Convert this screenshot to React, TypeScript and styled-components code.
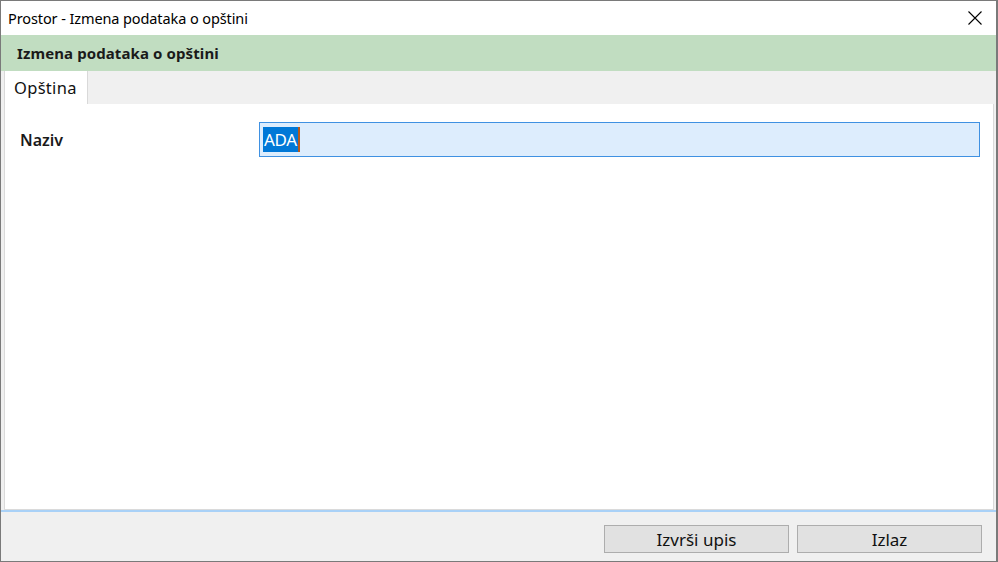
import { createGlobalStyle } from "styled-components";
import styled from "styled-components";

const GlobalStyle = createGlobalStyle`
  html, body {
    margin: 0;
    padding: 0;
    background: #ffffff;
  }
  body {
    font-family: "Noto Sans", "Open Sans", sans-serif;
    color: #000;
  }
`;

const App = () => {
  return (
    <>
      <GlobalStyle />
      <Window>
        <TitleBar>
          <TitleText>Prostor - Izmena podataka o opštini</TitleText>
          <CloseButton aria-label="Zatvori">
            <svg width="14" height="14" viewBox="0 0 14 14">
              <path d="M0.5 0.5 L13.5 13.5 M13.5 0.5 L0.5 13.5" stroke="#000" strokeWidth="1.1" fill="none" />
            </svg>
          </CloseButton>
        </TitleBar>
        <Header>Izmena podataka o opštini</Header>
        <Body>
          <TabStrip>
            <Tab active>Opština</Tab>
          </TabStrip>
          <Panel>
            <FieldRow>
              <Label>Naziv</Label>
              <InputBox>
                <Selected>ADA</Selected>
                <Caret />
              </InputBox>
            </FieldRow>
          </Panel>
          <Footer>
            <Button>Izvrši upis</Button>
            <Button>Izlaz</Button>
          </Footer>
        </Body>
      </Window>
    </>
  );
};

export default App;

const Window = styled.div`
  box-sizing: border-box;
  width: 998px;
  height: 562px;
  border: 1px solid #7a7a7a;
  border-right-width: 2px;
  display: flex;
  flex-direction: column;
  background: #f0f0f0;
`;

const TitleBar = styled.div`
  height: 34px;
  flex-shrink: 0;
  display: flex;
  align-items: center;
  justify-content: space-between;
  padding: 0 14px 0 7px;
  background: #ffffff;
`;

const TitleText = styled.span`
  font-size: 14.5px;
  color: #000;
  letter-spacing: -0.1px;
`;

const CloseButton = styled.div`
  display: flex;
  align-items: center;
  width: 14px;
  height: 14px;
`;

const Header = styled.div`
  height: 36px;
  flex-shrink: 0;
  display: flex;
  align-items: center;
  padding-left: 16px;
  background: #c1ddc1;
  font-size: 15px;
  font-weight: 700;
  color: #1a1a1a;
  letter-spacing: 0.1px;
`;

const Body = styled.div`
  flex: 1;
  display: flex;
  flex-direction: column;
  padding-left: 3px;
  background: #f0f0f0;
`;

const TabStrip = styled.div`
  height: 33px;
  flex-shrink: 0;
  display: flex;
  align-items: flex-end;
  border-left: 1px solid #d9d9d9;
`;

const Tab = styled.div<{ active?: boolean }>`
  box-sizing: border-box;
  height: 33px;
  padding: 0 10px 0 9px;
  display: flex;
  align-items: center;
  font-size: 16.5px;
  letter-spacing: 0.3px;
  color: #111;
  background: ${p => (p.active ? "#ffffff" : "#f0f0f0")};
  border-right: 1px solid #d9d9d9;
`;

const Panel = styled.div`
  flex: 1;
  margin-right: 2px;
  background: #ffffff;
  border: 1px solid #dadada;
  border-top: none;
  padding: 18px 13px 0 15px;
`;

const FieldRow = styled.div`
  display: flex;
  align-items: center;
`;

const Label = styled.span`
  width: 239px;
  font-size: 16px;
  font-weight: 600;
  color: #1a1a1a;
`;

const InputBox = styled.div`
  box-sizing: border-box;
  flex: 1;
  height: 35px;
  display: flex;
  align-items: center;
  padding-left: 3px;
  background: #ddedfd;
  border: 1px solid #3f91e2;
`;

const Selected = styled.span`
  display: inline-flex;
  align-items: center;
  height: 25px;
  padding: 0 1px;
  background: #0078d7;
  color: #ffffff;
  font-size: 17px;
  letter-spacing: -0.3px;
`;

const Caret = styled.span`
  width: 2px;
  height: 25px;
  background: #b85a1c;
`;

const Footer = styled.div`
  box-sizing: border-box;
  height: 51px;
  flex-shrink: 0;
  display: flex;
  align-items: flex-start;
  justify-content: flex-end;
  gap: 8px;
  padding: 13px 14px 0 0;
  margin-left: -3px;
  border-top: 2px solid #a9d1f7;
`;

const Button = styled.div`
  box-sizing: border-box;
  width: 185px;
  height: 28px;
  display: flex;
  align-items: center;
  justify-content: center;
  background: #e1e1e1;
  border: 1px solid #adadad;
  font-size: 17px;
  color: #111;
`;
